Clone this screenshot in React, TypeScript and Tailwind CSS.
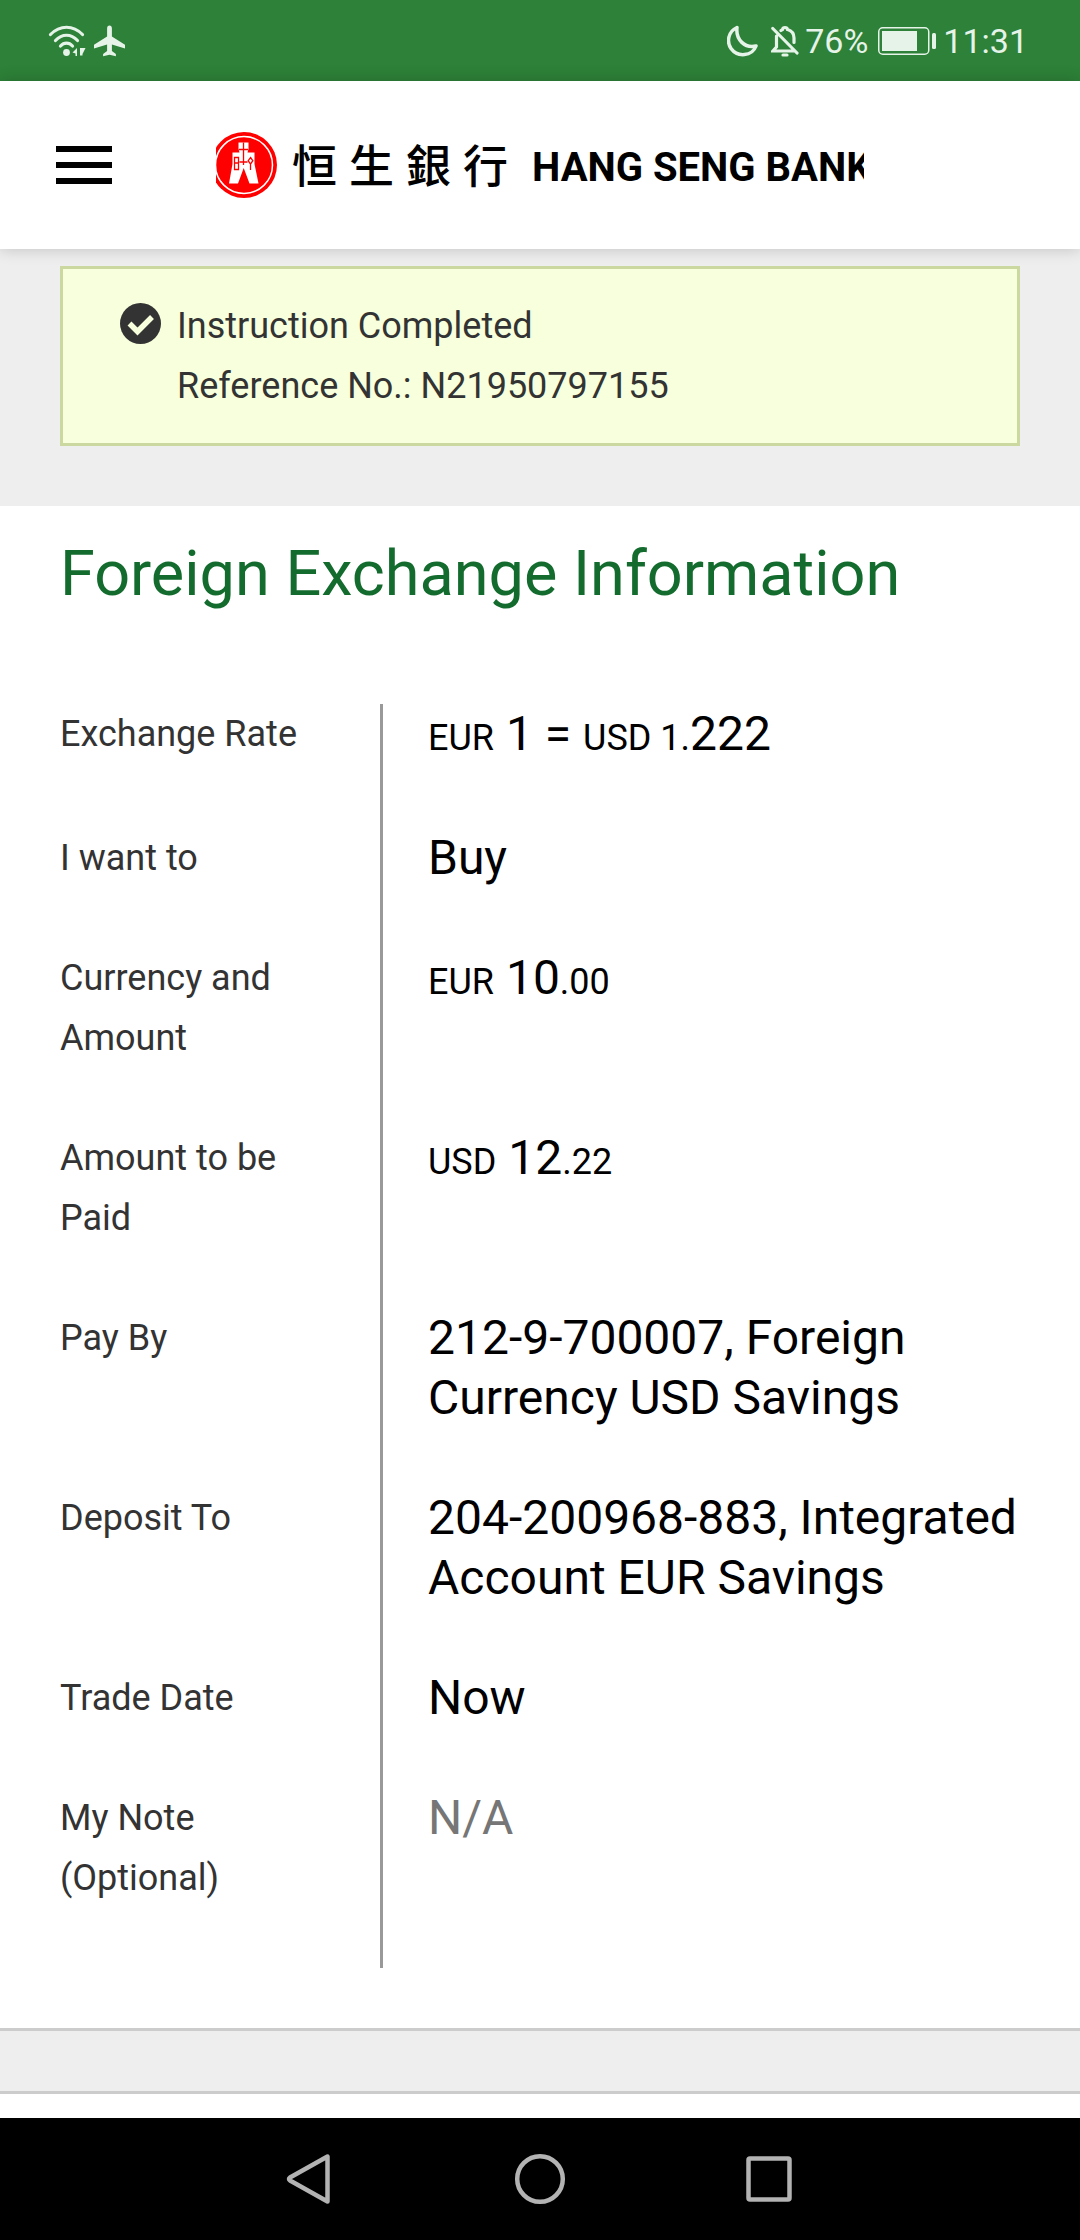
import type { ReactNode } from "react";

const Small = ({ children }: { children: ReactNode }) => (
  <span className="text-[36px]">{children}</span>
);

const rows: { label: string; value: ReactNode; muted?: boolean }[] = [
  {
    label: "Exchange Rate",
    value: (
      <>
        <Small>EUR</Small> 1 = <Small>USD 1.</Small>222
      </>
    ),
  },
  { label: "I want to", value: "Buy" },
  {
    label: "Currency and Amount",
    value: (
      <>
        <Small>EUR</Small> 10<Small>.00</Small>
      </>
    ),
  },
  {
    label: "Amount to be Paid",
    value: (
      <>
        <Small>USD</Small> 12<Small>.22</Small>
      </>
    ),
  },
  { label: "Pay By", value: "212-9-700007, Foreign Currency USD Savings" },
  { label: "Deposit To", value: "204-200968-883, Integrated Account EUR Savings" },
  { label: "Trade Date", value: "Now" },
  { label: "My Note (Optional)", value: "N/A", muted: true },
];

function StatusBar() {
  return (
    <div className="flex h-[81px] items-center justify-between bg-[#2d8138] pr-[52px] pl-12 text-[#e6f3e8]">
      <div className="flex items-center gap-2">
        <svg width="38" height="32" viewBox="0 0 38 32" fill="none" stroke="currentColor" strokeWidth="3.2" strokeLinecap="round" aria-hidden="true">
          <path d="M2.500 9.500C12-.2 25-.2 34.500 9.500" />
          <path d="M7.500 15.500C14 8.500 23 8.500 29.500 15.500" />
          <path d="M12.500 21C16 17.200 21 17.200 24.500 21" />
          <circle cx="18.500" cy="27.500" r="3.400" fill="currentColor" stroke="none" />
          <path d="M29 23v8h-1.500v-2.500L24.500 27.500zM32 23h5.500L34.500 29v1.500H32z" fill="currentColor" stroke="none" />
        </svg>
        <svg width="32" height="32" viewBox="0 0 32 32" fill="currentColor" aria-hidden="true">
          <path d="M15.500.5c1.500 0 2.400 1.200 2.400 2.700v8.300l13.100 8.300v3.800l-13.100-4v6.500l4 3v2.200l-6.400-1.500-6.400 1.500v-2.200l4-3v-6.500l-13.100 4v-3.800l13.100-8.300V3.200c0-1.500.9-2.700 2.400-2.700z" />
        </svg>
      </div>
      <div className="flex items-center text-[34px] leading-none">
        <svg className="mr-3" width="32" height="32" viewBox="0 0 32 32" fill="none" stroke="currentColor" strokeWidth="3.500" strokeLinejoin="round" aria-hidden="true">
          <path d="M10 2.500C1 6.500-.5 17 4 23.500c6.500 9 21 8 25-2.500C18 23.500 8.500 15 10 2.500z" />
        </svg>
        <svg className="mr-1.5" width="28" height="32" viewBox="0 0 28 32" fill="none" stroke="currentColor" strokeWidth="3.200" strokeLinecap="round" aria-hidden="true">
          <path d="M1.800 3.500 26 28M5.500 11v11L2 26h20M23 17.500V13c0-4.500-3-7.500-6.500-8.500-.5-2.700-4.500-2.700-5 0L10 5.500" />
          <path d="M12 30h4" />
        </svg>
        <span>76%</span>
        <svg className="mr-1.5 ml-2.5" width="59" height="28" viewBox="0 0 59 28" aria-hidden="true">
          <rect x=".75" y=".75" width="50" height="26.500" rx="4" fill="none" stroke="currentColor" strokeWidth="1.500" />
          <rect x="4" y="4" width="35" height="20" fill="currentColor" />
          <rect x="54" y="6" width="4" height="16" rx="1.500" fill="currentColor" />
        </svg>
        <span>11:31</span>
      </div>
    </div>
  );
}

function Logo() {
  return (
    <a href="#" aria-label="恒生銀行 HANG SENG BANK" className="flex w-3/5 items-center overflow-hidden whitespace-nowrap text-black">
      <svg className="shrink-0" width="62" height="66" viewBox="0 0 62 66" aria-hidden="true">
        <circle cx="28" cy="33" r="33" fill="#f00" />
        <circle cx="28" cy="33" r="28.500" fill="none" stroke="#fff" strokeWidth="1.500" />
        <path d="M22.500 10.500h10V17l-1 3.500h7V32l4 19.500h-9L27.700 36 22 51.500h-9L16.500 32V20.500h7l-1-3.500z" fill="#fff" />
        <path d="M27.500 10.500V33M23 17.500h9M23.500 30h8M18.500 25.500h4v12h-4zM18.500 31h4M34.500 25.500l2.300 3.200-2.300 3.300-2.300-3.300zM34.500 32v6" fill="none" stroke="#f00" strokeWidth="1.300" />
      </svg>
      <span className="ml-3.5 flex gap-3 pb-1 font-['Noto_Sans_CJK_TC',sans-serif] text-[45px] leading-none font-medium">
        <span>恒</span>
        <span>生</span>
        <span>銀</span>
        <span>行</span>
      </span>
      <span className="ml-6 pt-1.5 text-[40px] leading-none font-bold">HANG SENG BANK</span>
    </a>
  );
}

export default function App() {
  return (
    <div className="flex min-h-screen flex-col bg-white font-[Roboto,sans-serif] text-[#333]">
      <StatusBar />
      <header className="relative z-10 flex h-[168px] items-center justify-center bg-white shadow-[0_0_15px_rgba(0,0,0,0.2)]">
        <button type="button" aria-label="Menu" className="absolute left-14 flex w-14 flex-col gap-2.5">
          <span className="h-1.5 bg-black" />
          <span className="h-1.5 bg-black" />
          <span className="h-1.5 bg-black" />
        </button>
        <Logo />
      </header>
      <main className="flex flex-1 flex-col">
        <div className="bg-[#eee] px-[60px] pt-[17px] pb-[60px]">
          <div role="status" className="flex gap-4 border-3 border-[#cbd8a0] bg-[#f7ffdc] px-[57px] py-[27px] text-[36px] leading-[60px]">
            <svg className="mt-[7px] shrink-0" width="41" height="41" viewBox="0 0 41 41" aria-hidden="true">
              <circle cx="20.500" cy="20.500" r="20.500" fill="#333" />
              <path d="M9.500 20.500l8 8L32 14" fill="none" stroke="#f7ffdc" strokeWidth="5.500" />
            </svg>
            <div>
              <p>Instruction Completed</p>
              <p>Reference No.: N21950797155</p>
            </div>
          </div>
        </div>
        <section className="px-[60px] pt-[30px] pb-[60px]">
          <h1 className="mb-[92px] text-[63px] leading-[76px] text-[#136c2e]">Foreign Exchange Information</h1>
          <dl>
            {rows.map((row) => (
              <div key={row.label} className="grid grid-cols-3">
                <dt className="pr-[45px] pb-[60px] text-[36px] leading-[60px]">{row.label}</dt>
                <dd className={`col-span-2 border-l-3 border-[#999] pb-[60px] pl-[45px] text-[48px] leading-[60px] ${row.muted ? "text-[#767676]" : "text-black"}`}>
                  {row.value}
                </dd>
              </div>
            ))}
          </dl>
        </section>
        <div className="h-[66px] border-y-3 border-[#ccc] bg-[#eee]" />
        <div className="min-h-6 flex-1" />
      </main>
      <nav className="flex h-[122px] items-center justify-center gap-[174px] bg-black text-[#b3b3b3]">
        <button type="button" aria-label="Back">
          <svg width="56" height="56" viewBox="0 0 56 56" fill="none" stroke="currentColor" strokeWidth="4.500" strokeLinejoin="round">
            <path d="M45.500 5.500v45L8 29.500q-2-1.500 0-3z" />
          </svg>
        </button>
        <button type="button" aria-label="Home">
          <svg width="56" height="56" viewBox="0 0 56 56" fill="none" stroke="currentColor" strokeWidth="4.500">
            <circle cx="28" cy="28" r="22.800" />
          </svg>
        </button>
        <button type="button" aria-label="Recent apps">
          <svg width="56" height="56" viewBox="0 0 56 56" fill="none" stroke="currentColor" strokeWidth="4.500">
            <rect x="6.500" y="7.500" width="41" height="41" rx="1.500" />
          </svg>
        </button>
      </nav>
    </div>
  );
}
